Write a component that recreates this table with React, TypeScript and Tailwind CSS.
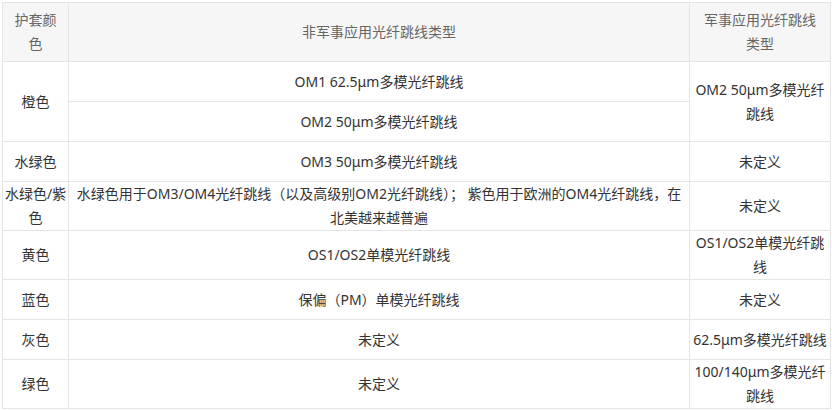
import React from 'react'

const body = 'text-[#333] px-px py-0 border border-[#e5e5e5] text-center align-middle'
const head = 'text-[#666] font-normal px-2 py-[5px] border border-[#e5e5e5] bg-[#f6f6f6] text-center align-middle'

export default function App() {
  return (
    <div
      className="bg-white w-[832px] h-[410px] pt-[2px] pl-[2px]"
      style={{ fontFamily: '"Noto Sans", "Noto Sans CJK SC", sans-serif' }}
    >
      <table className="border-collapse table-fixed w-[828px] text-[14px] leading-[24px]">
        <colgroup>
          <col className="w-[66px]" />
          <col className="w-[621px]" />
          <col className="w-[141px]" />
        </colgroup>
        <thead>
          <tr className="h-[59px]">
            <th className={head}>护套颜色</th>
            <th className={head}>非军事应用光纤跳线类型</th>
            <th className={head}>军事应用光纤跳线类型</th>
          </tr>
        </thead>
        <tbody>
          <tr className="h-[40px]">
            <td rowSpan={2} className={body}>橙色</td>
            <td className={body}>OM1 62.5μm多模光纤跳线</td>
            <td rowSpan={2} className={body}>OM2 50μm多模光纤跳线</td>
          </tr>
          <tr className="h-[40px]">
            <td className={body}>OM2 50μm多模光纤跳线</td>
          </tr>
          <tr className="h-[40px]">
            <td className={body}>水绿色</td>
            <td className={body}>OM3 50μm多模光纤跳线</td>
            <td className={body}>未定义</td>
          </tr>
          <tr className="h-[49px]">
            <td className={body}>水绿色/紫色</td>
            <td className={body}>
              水绿色用于OM3/OM4光纤跳线（以及高级别OM2光纤跳线）； 紫色用于欧洲的OM4光纤跳线，在北美越来越普遍
            </td>
            <td className={body}>未定义</td>
          </tr>
          <tr className="h-[49px]">
            <td className={body}>黄色</td>
            <td className={body}>OS1/OS2单模光纤跳线</td>
            <td className={body}>OS1/OS2单模光纤跳线</td>
          </tr>
          <tr className="h-[40px]">
            <td className={body}>蓝色</td>
            <td className={body}>保偏（PM）单模光纤跳线</td>
            <td className={body}>未定义</td>
          </tr>
          <tr className="h-[40px]">
            <td className={body}>灰色</td>
            <td className={body}>未定义</td>
            <td className={body}>62.5μm多模光纤跳线</td>
          </tr>
          <tr className="h-[49px]">
            <td className={body}>绿色</td>
            <td className={body}>未定义</td>
            <td className={body}>100/140μm多模光纤跳线</td>
          </tr>
        </tbody>
      </table>
    </div>
  )
}
